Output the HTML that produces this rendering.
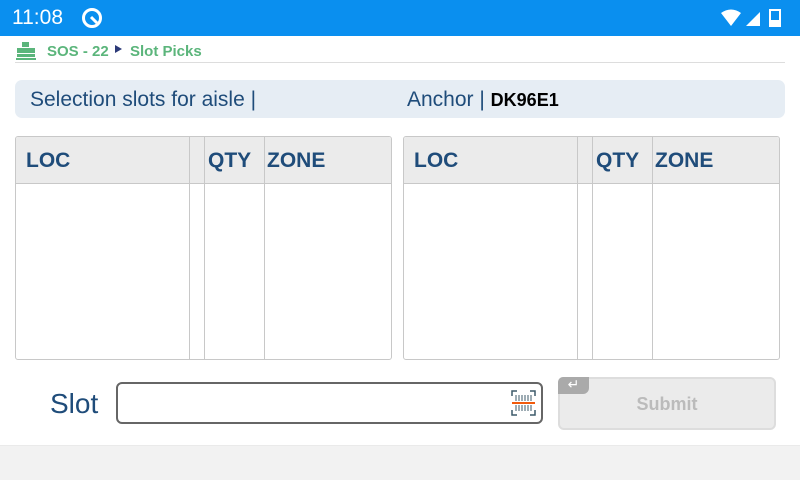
<!DOCTYPE html>
<html><head><style>
*{margin:0;padding:0;box-sizing:border-box}
body{width:800px;height:480px;position:relative;background:#fff;font-family:"Liberation Sans",sans-serif;overflow:hidden}
.a{position:absolute}
.sb{left:0;top:0;width:800px;height:36px;background:#0a8fef;color:#fff}
.tbl{border:1px solid #c8c8c8;border-radius:3px;top:136px;height:224px;width:377px;overflow:hidden}
.hd{position:absolute;left:0;top:0;right:0;height:47px;background:#ebebeb;border-bottom:1px solid #c8c8c8}
.cl{position:absolute;top:0;bottom:0;width:1px;background:#c8c8c8}
.th{position:absolute;top:12px;font-weight:bold;font-size:21px;color:#1f4c7a;letter-spacing:0}
</style></head><body>
<div class="a sb">
<div class="a" style="left:12px;top:6px;font-size:21px">11:08</div>
<svg class="a" style="left:81px;top:7px" width="22" height="22" viewBox="0 0 22 22"><circle cx="11" cy="11" r="8.5" fill="none" stroke="#fff" stroke-width="3"/><path d="M10 10 L16 16" stroke="#fff" stroke-width="3"/></svg>
<svg class="a" style="left:721px;top:9px" width="70" height="18" viewBox="0 0 70 18"><path d="M0 4 Q10 -3 20 4 L10 17Z" fill="#fff"/><path d="M25 17 L39 3 L39 17Z" fill="#fff"/><rect x="49" y="1" width="10" height="16" fill="none" stroke="#fff" stroke-width="2"/><rect x="49" y="11" width="10" height="6" fill="#fff"/></svg>
</div>
<svg class="a" style="left:16px;top:42px" width="20" height="18" viewBox="0 0 20 18"><rect x="6" y="0" width="7" height="5" fill="#5bb57b"/><rect x="1" y="6" width="18" height="5" fill="#5bb57b"/><rect x="1" y="12" width="18" height="3" fill="#5bb57b"/><rect x="0" y="16" width="20" height="2" fill="#5bb57b"/></svg>
<div class="a" style="left:47px;top:43px;font-size:15px;font-weight:bold;color:#5bb57b">SOS - 22</div>
<div class="a" style="left:115px;top:45px;width:0;height:0;border-left:7px solid #2c3a78;border-top:4.5px solid transparent;border-bottom:4.5px solid transparent"></div>
<div class="a" style="left:130px;top:43px;font-size:15px;font-weight:bold;color:#5bb57b">Slot Picks</div>
<div class="a" style="left:15px;top:62px;width:770px;height:1px;background:#ddd"></div>
<div class="a" style="left:15px;top:80px;width:770px;height:38px;background:#e6edf4;border-radius:7px"></div>
<div class="a" style="left:30px;top:88px;font-size:21px;color:#1f4c7a">Selection slots for aisle |</div>
<div class="a" style="left:407px;top:88px;font-size:21px;color:#1f4c7a">Anchor | <b style="color:#000;font-size:18px">DK96E1</b></div>
<div class="a tbl" style="left:15px"><div class="hd"></div>
<div class="cl" style="left:173px"></div><div class="cl" style="left:188px"></div><div class="cl" style="left:248px"></div>
<div class="th" style="left:10px">LOC</div><div class="th" style="left:192px">QTY</div><div class="th" style="left:251px">ZONE</div></div>
<div class="a tbl" style="left:403px"><div class="hd"></div>
<div class="cl" style="left:173px"></div><div class="cl" style="left:188px"></div><div class="cl" style="left:248px"></div>
<div class="th" style="left:10px">LOC</div><div class="th" style="left:192px">QTY</div><div class="th" style="left:251px">ZONE</div></div>
<div class="a" style="left:50px;top:388px;font-size:28px;color:#1f4c7a">Slot</div>
<div class="a" style="left:116px;top:382px;width:427px;height:42px;border:2px solid #666;border-radius:6px"></div>
<svg class="a" style="left:511px;top:390px" width="25" height="26" viewBox="0 0 25 26"><path d="M1 6V1H6M19 1H24V6M1 20V25H6M19 25H24V20" fill="none" stroke="#3d5a6a" stroke-width="1.5"/><path d="M5 5V11M8 5V11M11 5V11M14 5V11M17 5V11M20 5V11M5 15V21M8 15V21M11 15V21M14 15V21M17 15V21M20 15V21" stroke="#3d5a6a" stroke-width="1"/><rect x="1" y="12" width="23" height="2" fill="#f25a0c"/></svg>
<div class="a" style="left:558px;top:377px;width:218px;height:53px;border:2px solid #ddd;border-radius:6px;background:#ebebeb"></div>
<div class="a" style="left:558px;top:377px;width:31px;height:17px;background:#aaa;border-radius:5px 0 6px 0;color:#fff;font-size:14px;text-align:center;line-height:15px">↵</div>
<div class="a" style="left:558px;top:394px;width:218px;text-align:center;font-size:18px;font-weight:bold;color:#bbb">Submit</div>
<div class="a" style="left:0;top:445px;width:800px;height:35px;background:#f2f2f2;border-top:1px solid #eaeaea"></div>
</body></html>
